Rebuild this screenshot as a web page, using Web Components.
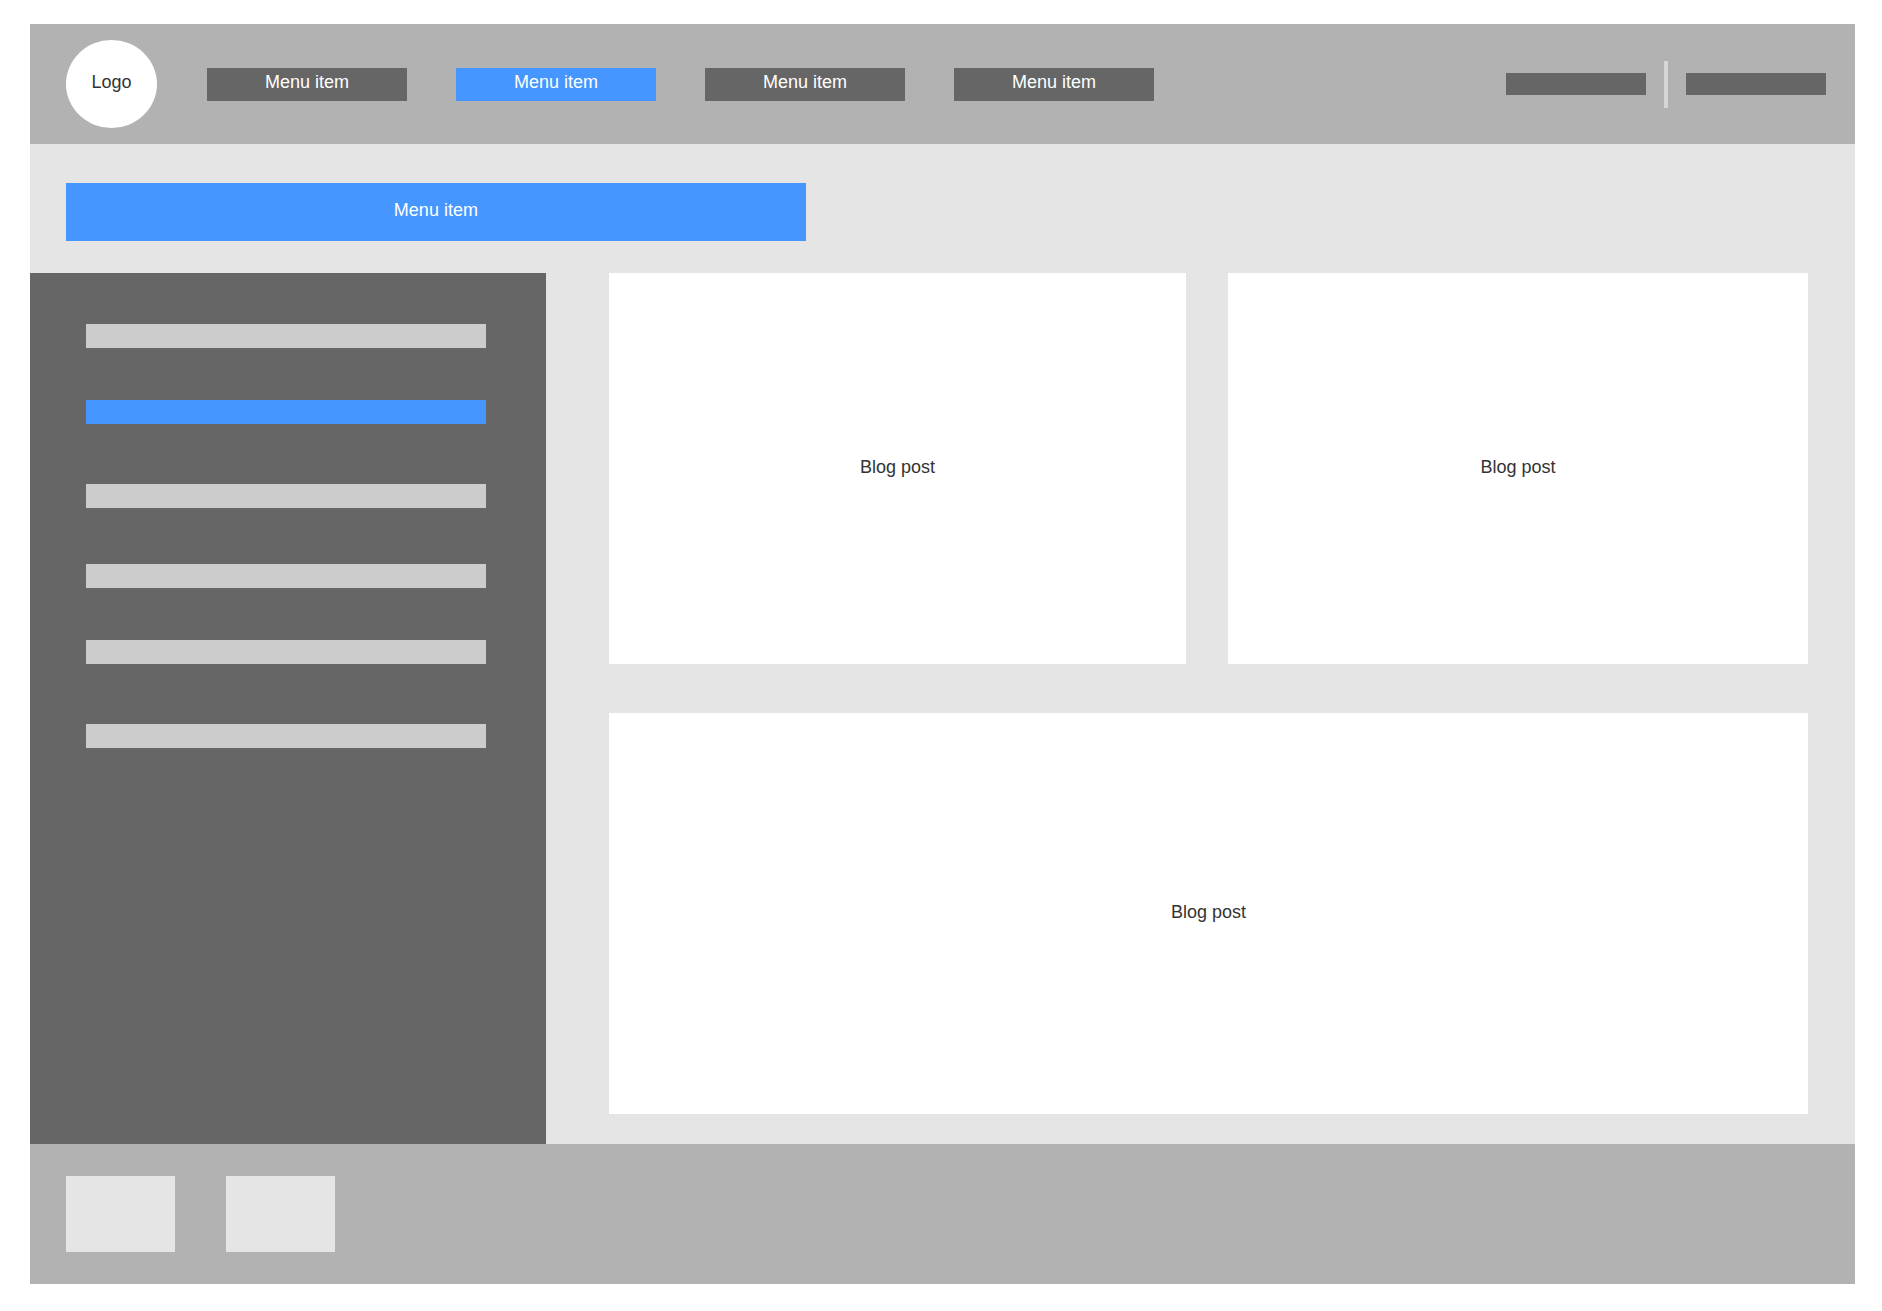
<!DOCTYPE html>
<html lang="en">
<head>
<meta charset="UTF-8">
<meta name="viewport" content="width=device-width, initial-scale=1.0">
<title>Blog</title>
<style>
  body {
    --bar: #b2b2b2;
    --page: #e5e5e5;
    --dark: #666666;
    --light: #cccccc;
    --accent: #4596ff;
    margin: 24px 27px 27px 30px;
    background: white;
    color: #333333;
    font: 18px/20px "Liberation Sans", Arial, sans-serif;
  }
</style>
</head>
<body>
<blog-page>
  <site-header slot="header">
    <site-logo slot="logo">Logo</site-logo>
    <menu-item>Menu item</menu-item>
    <menu-item active>Menu item</menu-item>
    <menu-item>Menu item</menu-item>
    <menu-item>Menu item</menu-item>
  </site-header>
  <menu-item slot="banner" active wide>Menu item</menu-item>
  <side-menu slot="side"></side-menu>
  <blog-post>Blog post</blog-post>
  <blog-post>Blog post</blog-post>
  <blog-post featured>Blog post</blog-post>
  <site-footer slot="footer"></site-footer>
</blog-page>

<script>
class BlogPage extends HTMLElement {
  constructor() {
    super();
    const shadow = this.attachShadow({ mode: 'open' });
    shadow.innerHTML = `
      <style>
        :host {
          display: block;
          background: var(--page);
        }

        .banner {
          padding: 39px 36px 32px;
        }

        .columns {
          display: grid;
          grid-template-columns: 516fr 1309fr;
        }

        main {
          display: grid;
          grid-template-columns: 577fr 580fr;
          gap: 49px 42px;
          padding: 0 47px 30px 63px;
        }
      </style>
      <slot name="header"></slot>
      <div class="banner"><slot name="banner"></slot></div>
      <div class="columns">
        <slot name="side"></slot>
        <main><slot></slot></main>
      </div>
      <slot name="footer"></slot>
    `;
  }
}

class SiteHeader extends HTMLElement {
  constructor() {
    super();
    const shadow = this.attachShadow({ mode: 'open' });
    shadow.innerHTML = `
      <style>
        :host {
          display: block;
          background: var(--bar);
        }

        header {
          display: flex;
          align-items: center;
          gap: 50px;
          min-height: 120px;
          padding: 0 29px 0 36px;
          box-sizing: border-box;
        }

        nav {
          display: flex;
          gap: 49px;
        }

        /* Account links, pushed to the right end */
        .account {
          display: flex;
          align-items: center;
          gap: 18px;
          margin-left: auto;
        }

        .account a {
          width: 140px;
          height: 22px;
          background: var(--dark);
        }

        .divider {
          width: 4px;
          height: 47px;
          background: #d6d6d6;
        }
      </style>
      <header>
        <slot name="logo"></slot>
        <nav><slot></slot></nav>
        <div class="account">
          <a href="#" aria-label="Log in"></a>
          <span class="divider"></span>
          <a href="#" aria-label="Sign up"></a>
        </div>
      </header>
    `;
  }
}

class SiteLogo extends HTMLElement {
  constructor() {
    super();
    const shadow = this.attachShadow({ mode: 'open' });
    shadow.innerHTML = `
      <style>
        :host {
          display: flex;
          align-items: center;
          justify-content: center;
          flex-shrink: 0;
          width: 91px;
          height: 88px;
          padding-bottom: 4px;
          box-sizing: border-box;
          border-radius: 50%;
          background: white;
        }
      </style>
      <slot></slot>
    `;
  }
}

class MenuItem extends HTMLElement {
  constructor() {
    super();
    const shadow = this.attachShadow({ mode: 'open' });
    shadow.innerHTML = `
      <style>
        :host {
          display: block;
          width: 200px;
        }

        a {
          display: flex;
          align-items: center;
          justify-content: center;
          height: 33px;
          padding-bottom: 4px;
          box-sizing: border-box;
          background: var(--dark);
          color: white;
          text-decoration: none;
        }

        :host([active]) a {
          background: var(--accent);
        }

        /* Wide version under the header */
        :host([wide]) {
          width: 42.2%;
        }

        :host([wide]) a {
          height: 58px;
        }
      </style>
      <a href="#"><slot></slot></a>
    `;
  }
}

class SideMenu extends HTMLElement {
  constructor() {
    super();
    const shadow = this.attachShadow({ mode: 'open' });
    shadow.innerHTML = `
      <style>
        :host {
          display: block;
          background: var(--dark);
        }

        nav {
          display: grid;
          grid-template-rows: 76px 84px 80px 76px 84px 24px;
          align-items: start;
          padding: 51px 60px 0 56px;
        }

        a {
          height: 24px;
          background: var(--light);
        }

        a.active {
          background: var(--accent);
        }
      </style>
      <nav>
        <a href="#" aria-label="Category 1"></a>
        <a href="#" aria-label="Category 2" class="active"></a>
        <a href="#" aria-label="Category 3"></a>
        <a href="#" aria-label="Category 4"></a>
        <a href="#" aria-label="Category 5"></a>
        <a href="#" aria-label="Category 6"></a>
      </nav>
    `;
  }
}

class BlogPost extends HTMLElement {
  constructor() {
    super();
    const shadow = this.attachShadow({ mode: 'open' });
    shadow.innerHTML = `
      <style>
        :host {
          display: grid;
          place-items: center;
          min-height: 391px;
          padding-bottom: 4px;
          box-sizing: border-box;
          background: white;
        }

        /* Takes the whole row */
        :host([featured]) {
          grid-column: 1 / -1;
          min-height: 401px;
        }
      </style>
      <article><slot></slot></article>
    `;
  }
}

class SiteFooter extends HTMLElement {
  constructor() {
    super();
    const shadow = this.attachShadow({ mode: 'open' });
    shadow.innerHTML = `
      <style>
        :host {
          display: block;
          background: var(--bar);
        }

        footer {
          display: flex;
          gap: 51px;
          padding: 32px 36px;
        }

        a {
          width: 109px;
          height: 76px;
          background: var(--page);
        }
      </style>
      <footer>
        <a href="#" aria-label="About"></a>
        <a href="#" aria-label="Contact"></a>
      </footer>
    `;
  }
}

customElements.define('blog-page', BlogPage);
customElements.define('site-header', SiteHeader);
customElements.define('site-logo', SiteLogo);
customElements.define('menu-item', MenuItem);
customElements.define('side-menu', SideMenu);
customElements.define('blog-post', BlogPost);
customElements.define('site-footer', SiteFooter);
</script>
</body>
</html>
